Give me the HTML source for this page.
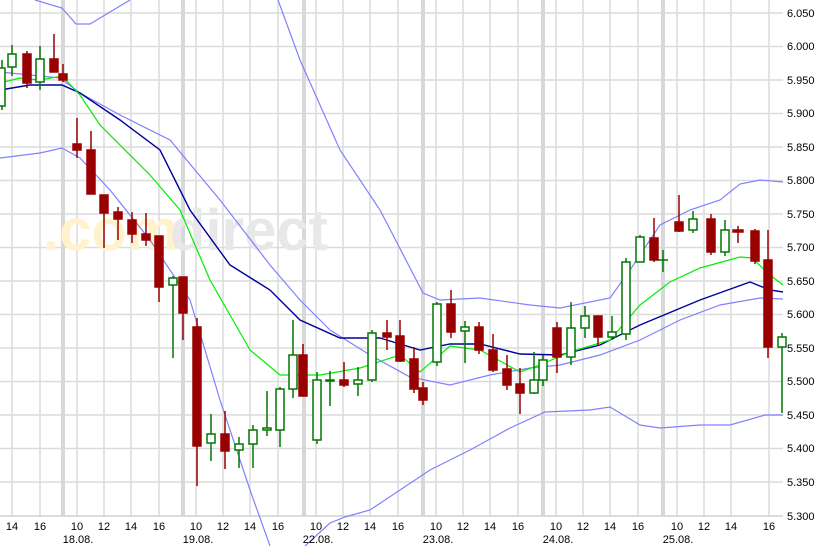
<!DOCTYPE html>
<html><head><meta charset="utf-8"><style>
html,body{margin:0;padding:0;background:#fff;}
svg{display:block;font-family:"Liberation Sans",sans-serif;}
</style></head><body>
<svg width="821" height="546" viewBox="0 0 821 546" xmlns="http://www.w3.org/2000/svg">
<rect width="821" height="546" fill="#fff"/>
<g stroke="#dcdcdc" stroke-width="1.5">
<line x1="0" y1="13" x2="783" y2="13"/><line x1="0" y1="46.5" x2="783" y2="46.5"/><line x1="0" y1="80" x2="783" y2="80"/><line x1="0" y1="113.5" x2="783" y2="113.5"/><line x1="0" y1="147" x2="783" y2="147"/><line x1="0" y1="180.5" x2="783" y2="180.5"/><line x1="0" y1="214" x2="783" y2="214"/><line x1="0" y1="247.5" x2="783" y2="247.5"/><line x1="0" y1="281" x2="783" y2="281"/><line x1="0" y1="314.5" x2="783" y2="314.5"/><line x1="0" y1="348" x2="783" y2="348"/><line x1="0" y1="381.5" x2="783" y2="381.5"/><line x1="0" y1="415" x2="783" y2="415"/><line x1="0" y1="448.5" x2="783" y2="448.5"/><line x1="0" y1="482" x2="783" y2="482"/>
<line x1="12" y1="0" x2="12" y2="516"/><line x1="40" y1="0" x2="40" y2="516"/><line x1="77" y1="0" x2="77" y2="516"/><line x1="104" y1="0" x2="104" y2="516"/><line x1="131" y1="0" x2="131" y2="516"/><line x1="159" y1="0" x2="159" y2="516"/><line x1="196" y1="0" x2="196" y2="516"/><line x1="223" y1="0" x2="223" y2="516"/><line x1="250" y1="0" x2="250" y2="516"/><line x1="278" y1="0" x2="278" y2="516"/><line x1="316" y1="0" x2="316" y2="516"/><line x1="343" y1="0" x2="343" y2="516"/><line x1="370" y1="0" x2="370" y2="516"/><line x1="398" y1="0" x2="398" y2="516"/><line x1="436" y1="0" x2="436" y2="516"/><line x1="463" y1="0" x2="463" y2="516"/><line x1="490" y1="0" x2="490" y2="516"/><line x1="518" y1="0" x2="518" y2="516"/><line x1="556" y1="0" x2="556" y2="516"/><line x1="583" y1="0" x2="583" y2="516"/><line x1="610" y1="0" x2="610" y2="516"/><line x1="638" y1="0" x2="638" y2="516"/><line x1="677" y1="0" x2="677" y2="516"/><line x1="704" y1="0" x2="704" y2="516"/><line x1="731" y1="0" x2="731" y2="516"/><line x1="769" y1="0" x2="769" y2="516"/>
</g>
<g stroke="#d8d8d8" stroke-width="4">
<line x1="63" y1="0" x2="63" y2="516"/><line x1="183" y1="0" x2="183" y2="516"/><line x1="304" y1="0" x2="304" y2="516"/><line x1="423" y1="0" x2="423" y2="516"/><line x1="543" y1="0" x2="543" y2="516"/><line x1="663" y1="0" x2="663" y2="516"/>
</g>
<line x1="0" y1="516" x2="783" y2="516" stroke="#d0d0d0" stroke-width="1.5"/>
<text x="43" y="250" font-size="58" font-weight="bold" fill="#fff2cc">.com</text>
<text x="170" y="250" font-size="58" font-weight="bold" fill="#e8e8e8">direct</text>
<g fill="none" stroke-width="1.2">
<polyline stroke="#8080ff" points="35,0 62,8 76,24 90,24 130,0"/>
<polyline stroke="#8080ff" points="278,0 300,60 340,150 380,210 423,293 440,300 480,298 530,305 560,308 610,298 630,270 660,225 690,210 720,200 740,184 760,180 783,182"/>
<polyline stroke="#8080ff" points="0,158 40,153 62,148 80,158 110,190 150,240 190,300 220,400 250,490 270,546"/>
<polyline stroke="#8080ff" points="305,546 330,523 345,517 370,510 400,490 430,470 470,450 510,428 545,412 590,410 610,407 640,425 660,428 700,425 730,425 765,415 783,415"/>
<polyline stroke="#8080ff" points="0,72 60,78 80,93 120,115 170,140 220,200 270,265 300,300 330,330 370,355 410,377 450,385 490,375 530,368 560,365 600,355 640,340 680,320 720,305 760,298 783,299"/>
<polyline stroke="#000099" stroke-width="1.4" points="0,90 30,85 62,85 80,93 120,120 160,150 190,210 230,265 270,290 300,320 340,338 380,338 420,350 450,344 480,344 520,354 560,355 600,345 640,325 700,300 750,282 770,290 783,292"/>
<polyline stroke="#00ee00" points="0,83 20,78 40,80 62,76 80,95 100,125 150,175 180,210 210,280 250,350 280,375 320,375 360,368 400,355 420,372 450,346 480,350 520,372 540,365 570,352 610,340 640,305 670,282 700,268 740,257 752,258 770,275 783,285"/>
</g>
<g id="c" stroke-width="1.5">
<!-- green: stroke green, white fill; red: fill -->
<g stroke="#007700" fill="#fff">
<line x1="2" y1="60" x2="2" y2="110"/><rect x="-3" y="68" width="8" height="38"/>
<line x1="12" y1="45" x2="12" y2="76"/><rect x="8" y="54" width="8" height="13"/>
<line x1="40" y1="46" x2="40" y2="90"/><rect x="36" y="59" width="8" height="23"/>
<line x1="173" y1="276" x2="173" y2="358"/><rect x="169" y="278" width="8" height="7"/>
<line x1="211" y1="414" x2="211" y2="461"/><rect x="207" y="434" width="8" height="9"/>
<line x1="239" y1="437" x2="239" y2="468"/><rect x="235" y="444" width="8" height="6"/>
<line x1="253" y1="425" x2="253" y2="468"/><rect x="249" y="430" width="8" height="14"/>
<line x1="267" y1="391" x2="267" y2="436"/><rect x="263" y="428" width="8" height="2"/>
<line x1="280" y1="387" x2="280" y2="447"/><rect x="276" y="389" width="8" height="41"/>
<line x1="293" y1="320" x2="293" y2="398"/><rect x="289" y="355" width="8" height="34"/>
<line x1="317" y1="372" x2="317" y2="444"/><rect x="313" y="380" width="8" height="60"/>
<line x1="330" y1="371" x2="330" y2="406"/><rect x="326" y="380" width="8" height="1"/>
<line x1="358" y1="367" x2="358" y2="396"/><rect x="354" y="380" width="8" height="4"/>
<line x1="372" y1="330" x2="372" y2="382"/><rect x="368" y="333" width="8" height="47"/>
<line x1="437" y1="302" x2="437" y2="366"/><rect x="433" y="304" width="8" height="58"/>
<line x1="465" y1="321" x2="465" y2="363"/><rect x="461" y="327" width="8" height="4"/>
<line x1="534" y1="352" x2="534" y2="394"/><rect x="530" y="380" width="8" height="13"/>
<line x1="543" y1="355" x2="543" y2="386"/><rect x="539" y="360" width="8" height="20"/>
<line x1="571" y1="302" x2="571" y2="365"/><rect x="567" y="328" width="8" height="29"/>
<line x1="585" y1="306" x2="585" y2="338"/><rect x="581" y="316" width="8" height="12"/>
<line x1="612" y1="316" x2="612" y2="340"/><rect x="608" y="332" width="8" height="5"/>
<line x1="626" y1="258" x2="626" y2="340"/><rect x="622" y="262" width="8" height="72"/>
<line x1="640" y1="235" x2="640" y2="262"/><rect x="636" y="237" width="8" height="25"/>
<line x1="663" y1="250" x2="663" y2="272"/><line x1="658" y1="260" x2="668" y2="260"/>
<line x1="693" y1="211" x2="693" y2="233"/><rect x="689" y="219" width="8" height="11"/>
<line x1="725" y1="220" x2="725" y2="256"/><rect x="721" y="230" width="8" height="22"/>
<line x1="782" y1="333" x2="782" y2="413"/><rect x="778" y="337" width="8" height="10"/>
</g>
<g stroke="#990000" fill="#990000">
<line x1="27" y1="51" x2="27" y2="88"/><rect x="23" y="54" width="8" height="29"/>
<line x1="54" y1="34" x2="54" y2="72"/><rect x="50" y="59" width="8" height="13"/>
<line x1="63" y1="64" x2="63" y2="82"/><rect x="59" y="74" width="8" height="6"/>
<line x1="77" y1="118" x2="77" y2="158"/><rect x="73" y="144" width="8" height="6"/>
<line x1="91" y1="131" x2="91" y2="194"/><rect x="87" y="150" width="8" height="44"/>
<line x1="104" y1="195" x2="104" y2="248"/><rect x="100" y="195" width="8" height="18"/>
<line x1="118" y1="207" x2="118" y2="240"/><rect x="114" y="212" width="8" height="7"/>
<line x1="132" y1="212" x2="132" y2="243"/><rect x="128" y="220" width="8" height="14"/>
<line x1="146" y1="213" x2="146" y2="246"/><rect x="142" y="234" width="8" height="6"/>
<line x1="159" y1="236" x2="159" y2="302"/><rect x="155" y="236" width="8" height="51"/>
<line x1="183" y1="277" x2="183" y2="340"/><rect x="179" y="277" width="8" height="36"/>
<line x1="197" y1="318" x2="197" y2="486"/><rect x="193" y="327" width="8" height="119"/>
<line x1="225" y1="411" x2="225" y2="469"/><rect x="221" y="434" width="8" height="17"/>
<line x1="303" y1="344" x2="303" y2="396"/><rect x="299" y="355" width="8" height="41"/>
<line x1="344" y1="362" x2="344" y2="387"/><rect x="340" y="380" width="8" height="5"/>
<line x1="387" y1="320" x2="387" y2="350"/><rect x="383" y="333" width="8" height="4"/>
<line x1="400" y1="320" x2="400" y2="362"/><rect x="396" y="336" width="8" height="25"/>
<line x1="414" y1="347" x2="414" y2="393"/><rect x="410" y="359" width="8" height="30"/>
<line x1="423" y1="382" x2="423" y2="405"/><rect x="419" y="388" width="8" height="12"/>
<line x1="451" y1="290" x2="451" y2="338"/><rect x="447" y="304" width="8" height="28"/>
<line x1="479" y1="322" x2="479" y2="354"/><rect x="475" y="327" width="8" height="23"/>
<line x1="493" y1="334" x2="493" y2="372"/><rect x="489" y="350" width="8" height="20"/>
<line x1="507" y1="355" x2="507" y2="390"/><rect x="503" y="369" width="8" height="16"/>
<line x1="520" y1="368" x2="520" y2="414"/><rect x="516" y="384" width="8" height="9"/>
<line x1="557" y1="322" x2="557" y2="373"/><rect x="553" y="328" width="8" height="29"/>
<line x1="598" y1="316" x2="598" y2="346"/><rect x="594" y="316" width="8" height="21"/>
<line x1="654" y1="218" x2="654" y2="262"/><rect x="650" y="238" width="8" height="22"/>
<line x1="679" y1="195" x2="679" y2="232"/><rect x="675" y="222" width="8" height="9"/>
<line x1="711" y1="214" x2="711" y2="255"/><rect x="707" y="219" width="8" height="33"/>
<line x1="738" y1="226" x2="738" y2="243"/><rect x="733" y="230" width="10" height="2"/>
<line x1="755" y1="229" x2="755" y2="264"/><rect x="751" y="231" width="8" height="30"/>
<line x1="768" y1="230" x2="768" y2="358"/><rect x="764" y="260" width="8" height="87"/>
</g>
</g>
<g font-size="11" fill="#000" text-anchor="start">
<text x="787" y="17">6.050</text><text x="787" y="50">6.000</text><text x="787" y="84">5.950</text><text x="787" y="117">5.900</text><text x="787" y="151">5.850</text><text x="787" y="184">5.800</text><text x="787" y="218">5.750</text><text x="787" y="251">5.700</text><text x="787" y="285">5.650</text><text x="787" y="318">5.600</text><text x="787" y="352">5.550</text><text x="787" y="385">5.500</text><text x="787" y="419">5.450</text><text x="787" y="452">5.400</text><text x="787" y="486">5.350</text><text x="787" y="520">5.300</text>
</g>
<g font-size="11" fill="#000" text-anchor="middle">
<text x="12" y="530">14</text><text x="40" y="530">16</text><text x="77" y="530">10</text><text x="104" y="530">12</text><text x="131" y="530">14</text><text x="159" y="530">16</text><text x="196" y="530">10</text><text x="223" y="530">12</text><text x="250" y="530">14</text><text x="278" y="530">16</text><text x="316" y="530">10</text><text x="343" y="530">12</text><text x="370" y="530">14</text><text x="398" y="530">16</text><text x="436" y="530">10</text><text x="463" y="530">12</text><text x="490" y="530">14</text><text x="518" y="530">16</text><text x="556" y="530">10</text><text x="583" y="530">12</text><text x="610" y="530">14</text><text x="638" y="530">16</text><text x="677" y="530">10</text><text x="704" y="530">12</text><text x="731" y="530">14</text><text x="769" y="530">16</text>
<text x="78" y="543">18.08.</text><text x="198" y="543">19.08.</text><text x="318" y="543">22.08.</text><text x="438" y="543">23.08.</text><text x="558" y="543">24.08.</text><text x="678" y="543">25.08.</text>
</g>
</svg>
</body></html>
